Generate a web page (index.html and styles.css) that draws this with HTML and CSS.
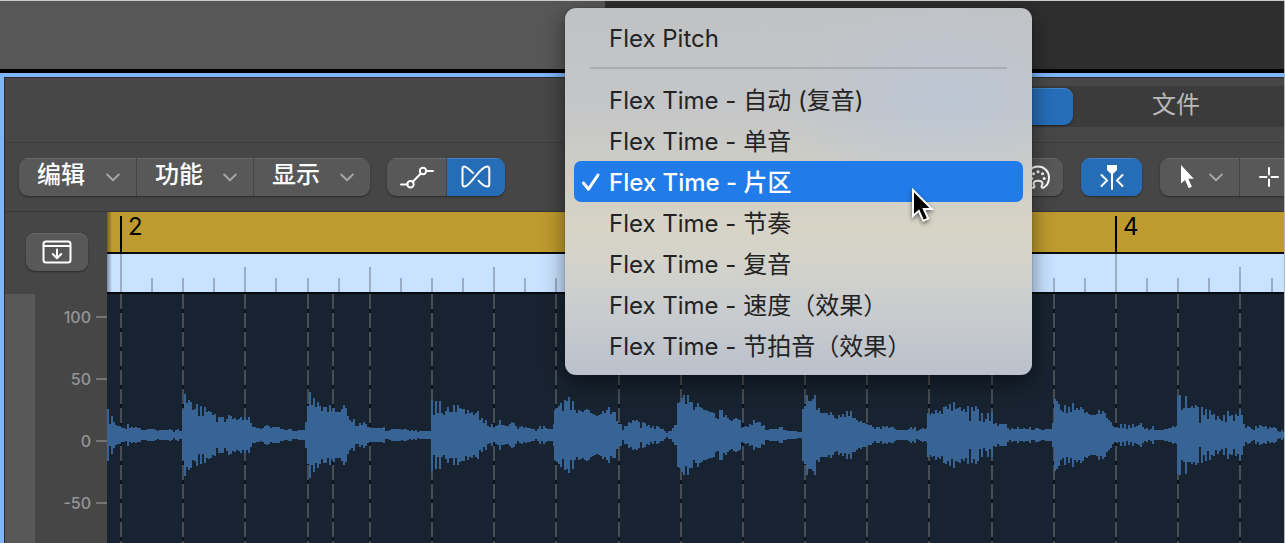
FILE: index.html
```html
<!DOCTYPE html>
<html lang="zh-CN">
<head>
<meta charset="utf-8">
<title>音轨编辑器</title>
<link rel="stylesheet" href="styles.css">
</head>
<body>
<div class="app">
  <div class="tracks"><div class="tracks-headers"></div></div>
  <main class="editor">
    <div class="tab-row">
      <div class="tabs">
        <button class="tab tab-active" type="button" aria-label="音轨"></button>
        <button class="tab" type="button">文件</button>
      </div>
    </div>
    <div class="toolbar">
      <div class="group">
        <button class="drop" type="button">编辑<svg class="chevron" viewBox="0 0 14 9"><path d="M1.200 1.500 7 7.300l5.800-5.800"/></svg></button>
        <button class="drop" type="button">功能<svg class="chevron" viewBox="0 0 14 9"><path d="M1.200 1.500 7 7.300l5.800-5.800"/></svg></button>
        <button class="drop" type="button">显示<svg class="chevron" viewBox="0 0 14 9"><path d="M1.200 1.500 7 7.300l5.800-5.800"/></svg></button>
      </div>
      <div class="group">
        <button class="tool" type="button" aria-label="自动化">
          <svg class="icon" width="34" height="24" viewBox="0 0 34 24"><path d="M1 19.500h6.500M12.800 16.800 20.800 8.500M26 6h7"/><circle cx="10.500" cy="19.300" r="3.200"/><circle cx="23" cy="6" r="3.200"/></svg>
        </button>
        <button class="tool tool-on" type="button" aria-label="Flex">
          <svg class="icon" width="30" height="24" viewBox="0 0 30 24"><path d="M12 8C8.500 4.500 5.500 1.500 3.200 1.500 1.800 1.500 1.500 2.500 1.500 4v15c0 1.600.6 2.600 2 2.600C9.500 21.600 18.500 1.500 26 1.500c1.700 0 2.300.9 2.300 2.500v15c0 1.600-.6 2.600-2 2.600-3 0-6-2.700-8.800-5.900"/></svg>
        </button>
      </div>
      <div class="tools-right">
        <div class="group">
          <button class="tool tool-narrow" type="button" aria-label="颜色">
            <svg class="icon" width="24" height="24" viewBox="0 0 24 24"><path d="M6.200 22.500C2.800 20.500 1 16.500 1 12.500 1 6.300 5.700 1.500 12 1.500s11 4.800 11 11c0 4-1.800 8-5.200 10-1.300.7-2.300.1-2.300-1.300 0-1 1-1.300 1-2.200 0-2-2-3.200-4.500-3.200s-4.500 1.200-4.500 3.200c0 .9 1 1.200 1 2.200 0 1.400-1 2-2.300 1.300Z"/><g class="solid"><circle cx="5.800" cy="13.500" r="1.500"/><circle cx="7.500" cy="8.700" r="1.500"/><circle cx="12" cy="6.700" r="1.500"/><circle cx="16.500" cy="8.700" r="1.500"/><circle cx="18.200" cy="13.500" r="1.500"/></g></svg>
          </button>
        </div>
        <div class="group">
          <button class="tool tool-on tool-wide" type="button" aria-label="播放头">
            <svg class="icon" width="24" height="26" viewBox="0 0 24 26"><path d="M12 8v17M1.500 11 7 16.500 1.500 22M22.500 11 17 16.500l5.500 5.500"/><path class="solid" d="M7.500 1h9q.5 0 .5.500V6l-3.500 3.500h-3L7 6V1.500q0-.5.5-.5Z"/></svg>
          </button>
        </div>
        <div class="group group-open">
          <button class="pointer" type="button" aria-label="指针工具">
            <svg width="16" height="26" viewBox="0 0 16 26"><path fill="#fff" d="M2 1v18.500l4-3.600 3.700 8.300 3.200-1.500-3.600-8h5.500Z"/></svg>
            <svg class="chevron" viewBox="0 0 14 9"><path d="M1.200 1.500 7 7.300l5.800-5.800"/></svg>
          </button>
          <button class="cross" type="button" aria-label="选取框工具">
            <svg class="icon" width="20" height="20" viewBox="0 0 20 20"><path d="M1 10h6.500M12.500 10H19M10 1v6.500M10 12.500V19"/></svg>
          </button>
        </div>
      </div>
    </div>
    <div class="timeline">
      <div class="ruler-side">
        <button class="catch" type="button" aria-label="导入">
          <svg class="icon" width="30" height="24" viewBox="0 0 30 24"><rect x="1.500" y="1.500" width="27" height="21" rx="2.500"/><path d="M2 6h26M15 9.500V18M10.800 14l4.200 4.200 4.200-4.200"/></svg>
        </button>
      </div>
      <div class="ruler">
        <svg id="ruler" width="100%" height="82"></svg>
      </div>
      <div class="scale">
        <div class="scale-strip"></div>
        <ul class="scale-list">
          <li>100</li><li>50</li><li>0</li><li>-50</li>
        </ul>
      </div>
      <div class="wave"><svg id="wave" width="100%" height="100%"></svg></div>
    </div>
  </main>
  <div class="menu" role="menu">
    <button class="item" role="menuitemradio" aria-checked="false" type="button">Flex Pitch</button>
    <hr class="rule">
    <button class="item" role="menuitemradio" aria-checked="false" type="button">Flex Time - 自动 (复音)</button>
    <button class="item" role="menuitemradio" aria-checked="false" type="button">Flex Time - 单音</button>
    <button class="item item-on" role="menuitemradio" aria-checked="true" type="button"><svg class="check" width="20" height="20" viewBox="0 0 20 20"><path d="M2.500 11 7.500 17.200 17 3"/></svg>Flex Time - 片区</button>
    <button class="item" role="menuitemradio" aria-checked="false" type="button">Flex Time - 节奏</button>
    <button class="item" role="menuitemradio" aria-checked="false" type="button">Flex Time - 复音</button>
    <button class="item" role="menuitemradio" aria-checked="false" type="button">Flex Time - 速度（效果）</button>
    <button class="item" role="menuitemradio" aria-checked="false" type="button">Flex Time - 节拍音（效果）</button>
  </div>
  <svg class="cursor" width="24" height="36" viewBox="0 0 24 36"><path d="M2 2v26l5.800-5.200 4.400 10 5-2.200-4.400-9.600h8Z"/></svg>
</div>
<script src="wave.js"></script>
</body>
</html>
```
FILE: styles.css
```css
* { box-sizing: border-box; }
body {
  margin: 0;
  font-family: Inter, "Noto Sans CJK SC", sans-serif;
  background: #474747;
}
button {
  margin: 0;
  padding: 0;
  border: 0;
  background: none;
  color: inherit;
  font: inherit;
}
.app {
  position: relative;
  display: flex;
  flex-direction: column;
  height: 100vh;
  overflow: hidden;
  border-top: 1px solid #c9ccc9;
  border-right: 1px solid #b4b6b8;
}
.tracks {
  flex: none;
  height: 72px;
  background: #2e2e2e;
  border-bottom: 4px solid #000;
}
.tracks-headers { width: 605px; height: 100%; background: #575757; }
.editor {
  flex: 1;
  min-height: 0;
  display: flex;
  flex-direction: column;
  border-top: 4px solid #7db6fb;
  border-left: 4px solid #7db6fb;
}
.tab-row {
  flex: none;
  display: flex;
  justify-content: flex-end;
  height: 66px;
  padding-top: 8px;
  border-top: 1px solid #2c2c2c;
  border-left: 1px solid #2c2c2c;
  border-bottom: 1px solid #3d3d3d;
  background: #474747;
}
.tabs {
  display: flex;
  height: 41px;
  padding: 2px 5px 2px 0;
  background: #3b3b3b;
}
.tab {
  width: 206px;
  padding-bottom: 4px;
  font-size: 24px;
  line-height: 33px;
  color: #b9b9b9;
}
.tab-active {
  border-radius: 9px;
  background: #266db8;
  box-shadow: 0 1px 2px #222, inset 0 1px #4382c4;
}
.toolbar {
  flex: none;
  display: flex;
  gap: 17px;
  height: 69px;
  padding: 15px 0 0 14px;
  border-left: 1px solid #2c2c2c;
  border-bottom: 1px solid #383838;
  background: #464646;
}
.tools-right { display: flex; gap: 18px; margin-left: auto; }
.group {
  display: flex;
  height: 38px;
  border-radius: 9px;
  overflow: hidden;
  background: #585858;
  box-shadow: 0 1px 2px #2a2a2a;
}
.group-open { border-radius: 9px 0 0 9px; }
.group button { box-shadow: inset 0 1px #696969; }
.group button + button { border-left: 1px solid #444; }
.drop {
  display: flex;
  align-items: center;
  justify-content: space-between;
  width: 117px;
  padding: 0 16px 4px 18px;
  font-size: 24px;
  line-height: 34px;
  font-weight: 500;
  color: #fff;
}
.chevron {
  width: 14px;
  height: 9px;
  fill: none;
  stroke: #a5a5a5;
  stroke-width: 2;
  stroke-linecap: round;
  stroke-linejoin: round;
}
.drop .chevron { margin-top: 4px; }
.icon { fill: none; stroke: #fff; stroke-width: 2; stroke-linecap: round; stroke-linejoin: round; }
.icon .solid { fill: #fff; stroke: none; }
.tool { display: grid; place-items: center; width: 59px; }
.tool-narrow { width: 50px; }
.tool-wide { width: 61px; }
.group .tool-on { background: #266db8; box-shadow: inset 0 1px #4382c4; }
.pointer {
  display: flex;
  align-items: center;
  gap: 14px;
  width: 79px;
  padding-left: 19px;
}
.cross { display: flex; align-items: center; width: 45px; padding-left: 19px; }
.cross svg, .pointer svg { display: block; flex: none; }
.timeline {
  flex: 1;
  min-height: 0;
  display: grid;
  grid-template-columns: 103px 1fr;
  grid-template-rows: 82px 1fr;
}
.ruler-side {
  padding: 21px 0 0 21px;
  border-left: 1px solid #2c2c2c;
  background: #464646;
}
.catch {
  display: grid;
  place-items: center;
  width: 62px;
  height: 38px;
  border-radius: 9px;
  background: #585858;
  box-shadow: 0 1px 2px #2a2a2a, inset 0 1px #696969;
}
.ruler {
  min-width: 0;
  background:
    linear-gradient(90deg, #0006, #0000 5px),
    linear-gradient(#be9b2e 40px, #0b0b0b 40px, #0b0b0b 42px, #c8e2ff 42px, #c8e2ff 80px, #050a10 80px);
}
.ruler svg, .wave svg { display: block; }
.ruler text { font-size: 24px; fill: #000; }
.ruler line { stroke: #9aadc4; stroke-width: 2; }
.ruler .bar { stroke: #000; }
.scale {
  display: flex;
  border-left: 1px solid #2c2c2c;
  background: #464646;
}
.scale-strip { width: 30px; background: #585858; }
.scale-list {
  flex: 1;
  display: flex;
  flex-direction: column;
  gap: 38px;
  margin: 0;
  padding: 11px 0 0;
  list-style: none;
  font-size: 16px;
  font-weight: 500;
  line-height: 24px;
  color: #959595;
}
.scale-list li { display: flex; align-items: center; justify-content: flex-end; gap: 5px; }
.scale-list li::after { content: ""; width: 11px; height: 2px; background: #757575; }
.wave { min-width: 0; min-height: 0; overflow: hidden; background: #172330; }
.wave line { stroke: #474d54; stroke-width: 2; stroke-dasharray: 15 4; }
.wave .track { stroke: #0e151d; stroke-dasharray: none; }
.wave path { fill: #376495; }
.menu {
  position: absolute;
  left: 565px;
  top: 7px;
  width: 467px;
  padding: 9px;
  border-radius: 11px;
  background:
    radial-gradient(ellipse 170px 110px at 82% 25%, #b9c7dab0, #b9c7da00),
    linear-gradient(#c1c2c4, #c5c6c7 28%, #cfcec6 45%, #d7d4c6 60%, #d3d3cb 70%, #c6cacf 86%, #bbc1cb);
  box-shadow: 0 0 1px #000a, 0 8px 22px #0007;
}
.item {
  position: relative;
  display: block;
  width: 100%;
  height: 41px;
  padding: 2px 0 0 35px;
  border-radius: 7px;
  text-align: left;
  font-size: 24px;
  line-height: 39px;
  white-space: nowrap;
  color: #232323;
}
.item-on { background: #217be8; color: #fff; font-weight: 500; }
.check {
  position: absolute;
  left: 7px;
  top: 11px;
  fill: none;
  stroke: #fff;
  stroke-width: 3;
  stroke-linecap: round;
  stroke-linejoin: round;
}
.rule { height: 2px; margin: 9px 16px 10px; border: 0; background: #a9acb1; }
.cursor {
  position: absolute;
  left: 911px;
  top: 187px;
  fill: #000;
  stroke: #fff;
  stroke-width: 2;
  filter: drop-shadow(0 2px 2px #0008);
}
```
FILE: wave.js
```js
// Half-heights of the waveform, one value per 2px column; "v*n" repeats a value.
const beats = [
  [0, "26 11 19 13 10 9 9 7 7 6 11 7 8 7 8 7 7 5*3 6*4 5 4 5*5 6 5 3 5 6 4 4 6 5"],
  [75, "25 41 32 35 33 25 26 31 19 29 19 28 23 24 23 20 21 13 18*3 13 16 20 19 16 17 15 16 18 15 18 15 18 12 8 8 7*2 6 7 9 10 9 7 8*4 6*2 5*2 6*2 4*3 5*4 4 3 3"],
  [198, "13 29 43 30 37 28 33 29 24 28 28 23 30 24 27 23*3 26 30 27 19 15 13 16 9 9 12 10 13 11 8 7*7 8 4 4 5 6*5 5 6 6 5 4 5 4 5 3 4*3"],
  [324, "36 20 34 22 34 22 20 24 28 23 23 30 23 30 27 26 26 21 25 22 23 20 22 24 15 17 12 15 9 8 11 7 9 10 15 10 10 9 9 11 13 12 9 6 8 9 7 8 7 7 6 6 4 6 9 6 9 7 6*3 11"],
  [447, "25 27 29 32 24 35 34 38 25 34 25 22 25 24 23 25 26 25 22 21 20 19 20 21 24 22 25 28 21 23 23 14 11 11 5 9 9 13 12 15 14 15 13 7 13 12 9 10 7 9 6 9 8 6 6 4 2 4 4 7 10"],
  [570, "32 33 37 40 31 40 33 33 25 28 32 28 27 25 25 24 23 23 22 17 16 25 25 18 20 17 15 14 16 17 16 15 7 8 9 8 11 10 15 12 13 13 9 10 5 5 6*5 8 8 5 5 4*5 3"],
  [695, "26 29 40 34 34 36 40 25 27 22*4 20 23 20 17 16 20 18 21 18 24 19 24 17 17 15 13 14 12 12 11 10 10 8 6 8 8 6 9 8 9 7 8 8 6 5*6 6 8 6 8 4 5 6 7 6 7"],
  [820, "22 20 22 21 25 22 24 21 28 29 26 31 24 33 26 27 28 24 26 23 29 14 28 24 29 26 14 22 13 16 22 14 23 11 12 9 11*4 7 5 7 6*2 8 6 6 7 6*2 8 5 5 7 7 6 5 5 6"],
  [945, "12 36 34 31 25 23 30 22 28 23 32 25 27 25 28 26 22 23 21 20*3 21 25 21 24 22 17 15 13 9 7 8 7 11 7 11 6 10 7 11 8 9 10 12 8 6 7 5 6 9 5 5*4 6*2 7 7 9 8 9 5"],
  [1070, "39 40 25 27 39 27 27 29 27 30 28 12 28 20 26 16 25 20 21 15 19 16 14 20 13 24 19 20 14 21 19 25 20 11 7 9 8 6 5 9 7 10 9 8 9 6 8 7 8 7 4 3 5 3 5 2"]
];
const MID = 141;
const BEAT = 62.19;
const FIRST = 14;
const EXTRA_MARKER = 226;

let shape = "";
beats.forEach(([start, text], i) => {
  const end = i + 1 < beats.length ? beats[i + 1][0] : 1180;
  const heights = text.split(" ").flatMap(t => {
    const [v, n = 1] = t.split("*").map(Number);
    return Array(n).fill(v);
  });
  for (let k = 0, x = start; x < end; k++, x += 2) {
    const h = heights[Math.min(k, heights.length - 1)];
    const w = Math.min(2, end - x);
    shape += `M${x} ${MID - h}h${w}v${2 * h}h${-w}z`;
  }
});

const rulerSvg = document.getElementById("ruler");
const waveSvg = document.getElementById("wave");

function draw() {
  const span = rulerSvg.getBoundingClientRect().width;

  const guides = [EXTRA_MARKER];
  for (let x = FIRST; x < span; x += BEAT) guides.push(Math.round(x));
  waveSvg.innerHTML =
    guides.map(x => `<line class="track" x1="${x}" x2="${x}" y1="0" y2="2000"/><line x1="${x}" x2="${x}" y1="0" y2="2000"/>`).join("") +
    `<path shape-rendering="crispEdges" d="${shape}"/>`;

  let ruler = "";
  for (let k = 0; FIRST + k * BEAT / 2 < span; k++) {
    const x = Math.round(FIRST + k * BEAT / 2);
    const top = k % 32 === 0 ? 42 : k % 4 === 0 ? 55 : 66;
    ruler += `<line x1="${x}" x2="${x}" y1="${top}" y2="80"/>`;
    if (k % 32 === 0) {
      ruler += `<line class="bar" x1="${x}" x2="${x}" y1="4" y2="42"/><text x="${x + 7}" y="23">${2 + k / 16}</text>`;
    }
  }
  rulerSvg.innerHTML = ruler;
}

draw();
window.addEventListener("resize", draw);
```
